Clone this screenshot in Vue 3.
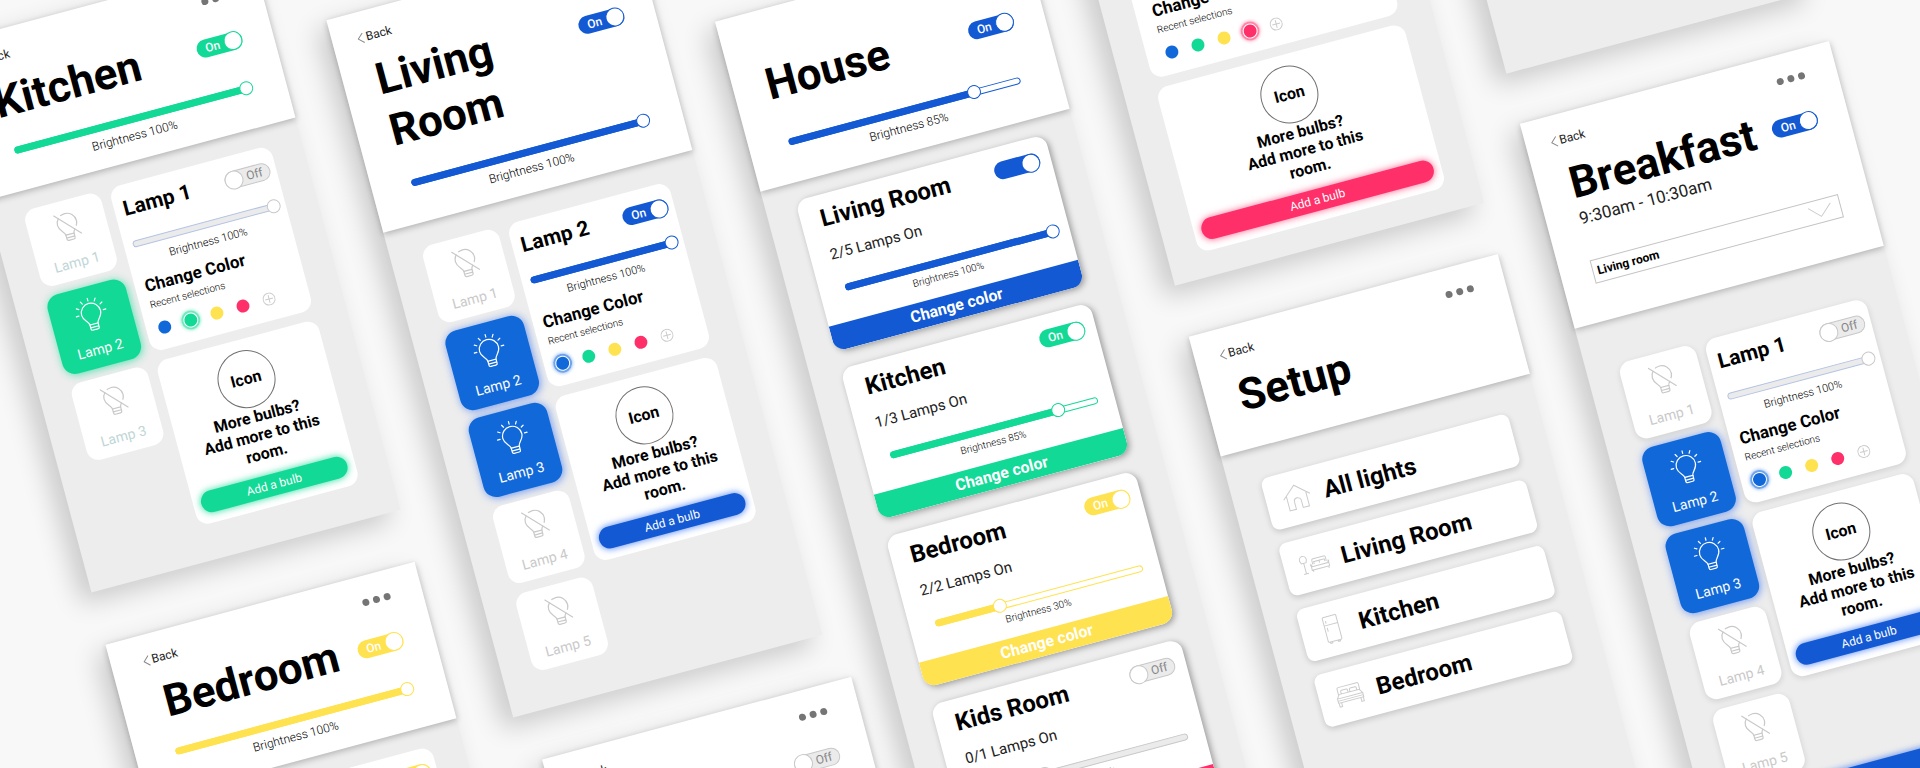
<script setup>
import { reactive } from 'vue'

const swatches = ['blue', 'green', 'yellow', 'pink']

const lampsOf = (count, on) =>
  Array.from({ length: count }, (_, i) => ({ name: `Lamp ${i + 1}`, on: on.includes(i + 1) }))

const boards = reactive([
  {
    id: 'kitchen', x: -65, y: 28, theme: 'green', title: 'Kitchen', back: true, toggle: true,
    slider: { at: 100, label: 100 }, kind: 'room', lamps: lampsOf(3, [2]),
    lamp: { name: 'Lamp 1', on: false }, selected: 'green',
  },
  {
    id: 'bedroom', x: -65, y: 650, theme: 'yellow', title: 'Bedroom', back: true, toggle: true,
    slider: { at: 100, label: 100 }, kind: 'room', lamps: lampsOf(2, [1, 2]),
    lamp: { name: 'Lamp 1', on: true }, selected: 'yellow',
  },
  {
    id: 'living', x: 310, y: 104, theme: 'blue', title: 'Living Room', back: true, toggle: true,
    slider: { at: 100, label: 100 }, kind: 'room', lamps: lampsOf(5, [2, 3]),
    lamp: { name: 'Lamp 2', on: true }, selected: 'blue',
  },
  {
    id: 'kids', x: 327, y: 874, theme: 'off', title: 'Kids Room', back: true, toggle: false,
    slider: { at: 30, label: 30 }, kind: 'room', lamps: lampsOf(1, []),
    lamp: { name: 'Lamp 1', on: false }, selected: 'pink',
  },
  {
    id: 'house', x: 685, y: 206, theme: 'blue', title: 'House', toggle: true,
    slider: { at: 80, label: 85 }, kind: 'house',
    rooms: [
      { name: 'Living Room', lamps: '2/5', theme: 'blue', on: true, text: '', at: 100, label: 100 },
      { name: 'Kitchen', lamps: '1/3', theme: 'green', on: true, text: 'On', at: 81, label: 85 },
      { name: 'Bedroom', lamps: '2/2', theme: 'yellow', on: true, text: 'On', at: 31, label: 30 },
      { name: 'Kids Room', lamps: '0/1', theme: 'pink', on: false, text: 'Off', at: 31, label: 30 },
    ],
  },
  {
    id: 'single', x: 1061, y: 180, theme: 'pink', kind: 'room', lamps: [],
    lamp: { name: 'Lamp 1', on: true }, selected: 'pink',
  },
  {
    id: 'setup', x: 1061, y: 633, theme: 'blue', title: 'Setup', back: true, kind: 'setup',
    items: ['All lights', 'Living Room', 'Kitchen', 'Bedroom'],
  },
  { id: 'blank', x: 1436, y: -107, theme: 'blue', kind: 'blank' },
  {
    id: 'breakfast', x: 1436, y: 513, theme: 'blue', title: 'Breakfast', back: true, toggle: true,
    time: '9:30am - 10:30am', kind: 'room', lamps: lampsOf(5, [2, 3]),
    lamp: { name: 'Lamp 1', on: false }, selected: 'blue', save: true,
  },
])
</script>

<template>
  <main class="stage">
    <div class="canvas">
      <article
        v-for="b in boards"
        :key="b.id"
        class="board"
        :class="[b.id, 'theme-' + b.theme]"
        :style="{ left: b.x + 'px', top: b.y + 'px' }"
      >
        <header v-if="b.title" class="head">
          <div class="bar">
            <a v-if="b.back" class="back" href="#">
              <svg viewBox="0 0 7 11" width="7" height="11"><path d="M6.3 .5 1 5.5l5.3 5" /></svg>Back
            </a>
            <button class="dots" type="button" aria-label="Menu"><i></i><i></i><i></i></button>
          </div>
          <div class="title-row">
            <h1>{{ b.title }}</h1>
            <label v-if="b.toggle !== undefined" class="toggle" :class="{ off: !b.toggle }">
              <input v-model="b.toggle" type="checkbox" :aria-label="b.title" />
              <span>{{ b.toggle ? 'On' : 'Off' }}</span>
            </label>
          </div>
          <template v-if="b.slider">
            <div class="slider" :class="{ off: !b.toggle }">
              <div class="track"><div class="fill" :style="{ width: b.slider.at + '%' }"></div></div>
              <input v-model="b.slider.at" type="range" :aria-label="b.title + ' brightness'" />
            </div>
            <p class="bright">Brightness {{ b.slider.label }}%</p>
          </template>
          <template v-if="b.time">
            <p class="time">{{ b.time }}</p>
            <div class="picker">
              <select aria-label="Room">
                <option>Living room</option>
                <option>Kitchen</option>
                <option>Bedroom</option>
              </select>
              <svg viewBox="0 0 24 12" width="24" height="12"><path d="M.5 .5 11.5 11.5 23.5 .5" /></svg>
            </div>
          </template>
        </header>

        <section v-if="b.kind === 'room'" class="room" :class="{ wide: !b.lamps.length }">
          <div v-if="b.lamps.length" class="lamps">
            <button v-for="l in b.lamps" :key="l.name" class="tile" :class="{ on: l.on }" type="button">
              <svg v-if="l.on" viewBox="0 0 32 34" width="32" height="34">
                <path d="M11.8 27.2c0-3.6-5.6-5.4-5.6-11.4a9.8 9.8 0 0 1 19.6 0c0 6-5.6 7.8-5.6 11.4z" />
                <path d="M11.8 27.2v4.2q0 1.6 1.6 1.6h5.2q1.6 0 1.6-1.6v-4.2M11.8 30.2h8.4" />
                <path d="M16 3.4V.8M9.8 5 8.4 2.6M22.2 5l1.4-2.4M5 9.4 2.8 8.1M27 9.4l2.2-1.3M3.4 15.8H.6M28.6 15.8h2.8" />
              </svg>
              <svg v-else viewBox="0 3 32 34" width="32" height="34">
                <path d="M11.8 27.2c0-3.6-5.6-5.4-5.6-11.4a9.8 9.8 0 0 1 19.6 0c0 6-5.6 7.8-5.6 11.4z" />
                <path d="M11.8 27.2v4.2q0 1.6 1.6 1.6h5.2q1.6 0 1.6-1.6v-4.2M11.8 30.2h8.4" />
                <path class="gap" d="M6.4 4.2 28.4 27.4" />
                <path d="M5 5.6 27.4 29.2" />
              </svg>
              <span>{{ l.name }}</span>
            </button>
          </div>

          <div class="cards">
            <section class="card lamp">
              <div class="lamp-row">
                <h2>{{ b.lamp.name }}</h2>
                <label class="toggle" :class="{ off: !b.lamp.on }">
                  <input v-model="b.lamp.on" type="checkbox" :aria-label="b.lamp.name" />
                  <span>{{ b.lamp.on ? 'On' : 'Off' }}</span>
                </label>
              </div>
              <div class="slider" :class="{ off: !b.lamp.on }">
                <div class="track"><div class="fill"></div></div>
                <input type="range" value="100" :aria-label="b.lamp.name + ' brightness'" />
              </div>
              <p class="bright">Brightness 100%</p>
              <h3>Change Color</h3>
              <p class="recent">Recent selections</p>
              <div class="swatches">
                <button
                  v-for="s in swatches"
                  :key="s"
                  type="button"
                  class="swatch"
                  :class="['swatch-' + s, { selected: s === b.selected }]"
                  :aria-label="s"
                ></button>
                <button class="plus" type="button" aria-label="Add color">
                  <svg viewBox="0 0 13 13" width="13" height="13">
                    <circle cx="6.5" cy="6.5" r="6" /><path d="M6.5 2.5v8M2.5 6.5h8" />
                  </svg>
                </button>
              </div>
            </section>

            <section class="card more">
              <div class="icon">Icon</div>
              <p>More bulbs?<br />Add more to this<br />room.</p>
              <button type="button" class="pill">Add a bulb</button>
            </section>
          </div>
          <button v-if="b.save" type="button" class="pill save">Save</button>
        </section>

        <section v-else-if="b.kind === 'house'" class="rooms">
          <article v-for="r in b.rooms" :key="r.name" class="room-card" :class="'theme-' + r.theme">
            <div class="room-row">
              <h2>{{ r.name }}</h2>
              <label class="toggle" :class="{ off: !r.on }">
                <input v-model="r.on" type="checkbox" :aria-label="r.name" />
                <span>{{ r.text }}</span>
              </label>
            </div>
            <p class="count">{{ r.lamps }} Lamps On</p>
            <div class="slider" :class="{ off: !r.on }">
              <div class="track"><div class="fill" :style="{ width: r.at + '%' }"></div></div>
              <input v-model="r.at" type="range" :aria-label="r.name + ' brightness'" />
            </div>
            <p class="bright">Brightness {{ r.label }}%</p>
            <button type="button" class="change">Change color</button>
          </article>
        </section>

        <nav v-else-if="b.kind === 'setup'" class="items">
          <a v-for="(name, i) in b.items" :key="name" class="item" href="#">
            <svg viewBox="0 0 30 30" width="30" height="30">
              <template v-if="i === 0">
                <path d="M1.5 14.5 15 2.5l13.5 12M5 12v14.5h6.5v-7.5a3.5 3.5 0 0 1 7 0v7.5H25V12" />
              </template>
              <template v-else-if="i === 1">
                <path d="M1 9.5a3.500 4 0 0 1 7 0l-1 3H2zM4.5 12.5v10.5M2 23.500h5" />
                <path d="M13 16v-4q0-1.5 1.5-1.5h11q1.5 0 1.500 1.5v4M14.5 16v-2.5h5.500v2.5M20 16v-2.5h5.5v2.5M11 15.5q-1 1 0 2v4h18v-4q1-1 0-2l-1 2.5H12zM12 21.5v2M28 21.5v2" />
              </template>
              <template v-else-if="i === 2">
                <path d="M8 3q0-1 1-1h12q1 0 1 1v23.5q0 1-1 1H9q-1 0-1-1zM8 10.5h14M10.5 6v2.5M10.5 13v4M10 27.5v1.5h2v-1.5M18 27.5v1.5h2v-1.5" />
              </template>
              <template v-else>
                <path d="M4 14V7q0-1.5 1.5-1.5h19Q26 5.500 26 7v7M7 12.5V10q0-1 1-1h5q1 0 1 1v2.5M16 12.5V10q0-1 1-1h5q1 0 1 1v2.5M4.5 12.5h21L28 16.5H2zM2 16.500v4.5h26v-4.5M2 18.8h26M2.5 21v4h2.5v-4M25 21v4h2.5v-4" />
              </template>
            </svg>
            <span>{{ name }}</span>
          </a>
        </nav>
      </article>
    </div>
  </main>
</template>

<style>
body {
  margin: 0;
  background: #f8f8f8;
}
</style>

<style scoped>
.stage {
  position: relative;
  width: 100%;
  height: 100vh;
  overflow: hidden;
  background: #f8f8f8;
  font-family: Roboto, "Liberation Sans", sans-serif;
  color: #000;
}
.canvas {
  position: absolute;
  left: 0;
  top: 0;
  transform: rotate(-15deg);
  transform-origin: 0 0;
}
.board {
  position: absolute;
  width: 320px;
  background: #ededed;
  box-shadow: -12px 8px 26px rgba(0, 0, 0, 0.19);
}
.bedroom, .kids, .setup, .blank { min-height: 568px; }

.theme-blue { --c: #1259d3; --glow: rgba(18, 89, 240, 0.6); --tile: #1169d9; }
.theme-green { --c: #12d995; --glow: rgba(18, 217, 149, 0.7); --tile: #12d995; }
.theme-yellow { --c: #ffe24f; --glow: rgba(255, 226, 79, 0.7); --tile: #ffe24f; }
.theme-pink { --c: #ff3069; --glow: rgba(255, 48, 105, 0.6); --tile: #ff3069; }
.theme-off { --c: #bbb; --glow: rgba(0, 0, 0, 0.2); --tile: #bbb; }

h1, h2, h3, p { margin: 0; }
button {
  padding: 0;
  border: 0;
  background: none;
  font-family: inherit;
  color: inherit;
}
a { color: inherit; text-decoration: none; }
svg { display: block; fill: none; stroke: currentColor; stroke-width: 1; }

/* Header */
.head {
  position: relative;
  background: #fff;
  padding-bottom: 17px;
  box-shadow: 0 2px 6px rgba(0, 0, 0, 0.25);
}
.breakfast .head { padding-bottom: 38px; }
.setup .head { padding-bottom: 26px; }
.bar {
  display: flex;
  align-items: center;
  height: 14px;
  padding: 19px 32px 12px 25px;
}
.house .bar { padding-bottom: 16px; }
.bedroom .bar { padding-left: 32px; }
.back {
  display: flex;
  align-items: center;
  gap: 2px;
  font-size: 12px;
  line-height: 14px;
  color: #222;
}
.back svg { color: #888; }
.dots {
  display: flex;
  gap: 4px;
  margin-left: auto;
}
.dots i {
  width: 7px;
  height: 7px;
  border-radius: 50%;
  background: #757575;
}
.title-row {
  display: flex;
  justify-content: space-between;
  align-items: flex-start;
  padding: 0 31px 0 33px;
}
.bedroom .title-row { padding-left: 42px; }
h1 {
  font-size: 44px;
  line-height: 53px;
  font-weight: 700;
}
.title-row .toggle { margin-top: 17px; }
.head .slider { margin: 16px 40px 0; }
.living .head .slider { margin-top: 21px; }
.house .head .slider { margin-top: 26px; }
.bright {
  margin-top: 3px;
  font-size: 12px;
  line-height: 14px;
  font-weight: 300;
  text-align: center;
}
.time {
  padding-left: 33px;
  font-size: 17px;
  line-height: 18px;
  font-weight: 400;
  color: #222;
}
.picker {
  display: grid;
  align-items: center;
  margin: 34px 31px 0 32px;
}
.picker > * { grid-area: 1 / 1; }
.picker select {
  appearance: none;
  height: 24px;
  padding: 0 4px;
  border: 1px solid #c4c4c4;
  border-radius: 0;
  background: #fff;
  color: #000;
  font: 700 12px/16px Roboto, "Liberation Sans", sans-serif;
}
.picker svg {
  justify-self: end;
  margin-right: 9px;
  color: #ccc;
  pointer-events: none;
}

/* Toggle */
.toggle {
  display: grid;
  flex: none;
  align-items: center;
  width: 47px;
  height: 19px;
}
.toggle > * { grid-area: 1 / 1; }
.toggle input {
  appearance: none;
  display: flex;
  justify-content: flex-end;
  align-items: center;
  box-sizing: border-box;
  width: 47px;
  height: 18px;
  margin: 0;
  border-radius: 9px;
  background: var(--c);
}
.toggle input::before {
  content: "";
  box-sizing: border-box;
  flex: none;
  width: 19px;
  height: 19px;
  border: 1px solid var(--c);
  border-radius: 50%;
  background: #fff;
}
.toggle span {
  padding-left: 9px;
  font-size: 12px;
  line-height: 14px;
  font-weight: 500;
  color: #fff;
  pointer-events: none;
}
.toggle.off input {
  justify-content: flex-start;
  border: 1px solid #c8c8c8;
  background: #ebebeb;
}
.toggle.off input::before { border-color: #c8c8c8; margin-left: -1px; }
.toggle.off span {
  padding: 0 8px 0 0;
  text-align: right;
  font-weight: 400;
  color: #858585;
}

/* Slider */
.slider {
  display: grid;
  align-items: center;
  height: 14px;
}
.slider > * { grid-area: 1 / 1; }
.track {
  box-sizing: border-box;
  height: 7px;
  border: 1px solid var(--c);
  border-radius: 4px;
  background: #fff;
}
.fill {
  height: 7px;
  margin: -1px;
  border-radius: 4px;
  background: var(--c);
}
.slider input {
  appearance: none;
  height: 14px;
  margin: 0 -7px;
  background: transparent;
}
.slider input::-webkit-slider-thumb {
  appearance: none;
  box-sizing: border-box;
  width: 14px;
  height: 14px;
  border: 1px solid var(--c);
  border-radius: 50%;
  background: #fff;
}
.slider.off .track { border-color: #b4c3e4; background: #ebebeb; }
.room-card .slider.off .track { border-color: #c8c8c8; }
.slider.off .fill { background: none; }
.slider.off input::-webkit-slider-thumb { border-color: #c8c8c8; }

/* Room screen */
.room {
  display: grid;
  grid-template-columns: 79px 1fr;
  align-items: start;
  gap: 10px;
  padding: 20px 32px 36px 32px;
}
.living .room { padding: 24px 32px 38px; }
.breakfast .room { padding-top: 45px; }
.room.wide { grid-template-columns: 1fr; padding: 25px 32px; }
.lamps, .cards { display: grid; gap: 10px; }
.tile {
  display: flex;
  flex-direction: column;
  align-items: center;
  justify-content: space-between;
  height: 80px;
  padding: 10px 0 9px;
  border-radius: 12px;
  background: #fff;
  color: #c9c9c9;
  font-size: 14px;
  line-height: 16px;
}
.kitchen .tile { color: #c0d6d6; }
.kitchen .tile svg { color: #c9c9c9; }
.tile.on, .kitchen .tile.on, .kitchen .tile.on svg { color: #fff; }
.tile.on {
  background: var(--tile);
  box-shadow: 0 0 0 1px var(--tile), 1px 1px 8px 1px var(--glow);
}
.tile svg { stroke-width: 1.2; stroke-linecap: round; }
.tile .gap { stroke: #fff; stroke-width: 3; }
.card {
  box-sizing: border-box;
  height: 170px;
  border-radius: 12px;
  background: #fff;
}
.breakfast .card, .breakfast .tile:not(.on) { box-shadow: 0 2px 6px rgba(0, 0, 0, 0.12); }
.lamp { padding: 12px 6px 0 9px; }
.wide .lamp { padding: 12px 13px 0 16px; }
.lamp-row, .room-row {
  display: flex;
  justify-content: space-between;
  align-items: center;
}
.lamp h2 { font-size: 21px; line-height: 24px; font-weight: 700; }
.lamp .slider { margin: 17px 6px 0 0; }
.lamp .bright { margin: 4px 5px 0 0; font-size: 11px; }
h3 { margin-top: 9px; padding-left: 1px; font-size: 17px; line-height: 20px; font-weight: 700; }
.recent { margin-top: 4px; padding-left: 1px; font-size: 10px; line-height: 12px; font-weight: 300; }
.swatches {
  display: flex;
  align-items: center;
  gap: 8px;
  height: 20px;
  margin-top: 8px;
}
.swatch, .plus {
  display: grid;
  place-items: center;
  width: 19px;
  height: 19px;
  border-radius: 50%;
}
.plus { color: #ccc; }
.swatch::before {
  content: "";
  width: 13px;
  height: 13px;
  border-radius: 50%;
  background: var(--s);
}
.swatch.selected {
  box-sizing: border-box;
  border: 2px solid var(--ring);
  box-shadow: 0 0 4px var(--ring);
}
.swatch-blue { --s: #1169d9; --ring: #6fa4ea; }
.swatch-green { --s: #12d995; --ring: #72e8bf; }
.swatch-yellow { --s: #ffe24f; --ring: #ffee95; }
.swatch-pink { --s: #ff3069; --ring: #ff86a6; }

.more {
  display: flex;
  flex-direction: column;
  align-items: center;
  padding: 11px 8px 10px;
  font-size: 16px;
  line-height: 19px;
  font-weight: 700;
  text-align: center;
}
.icon {
  box-sizing: border-box;
  width: 58px;
  height: 58px;
  border: 1px solid #707070;
  border-radius: 50%;
  line-height: 56px;
}
.more p { padding-left: 2px; }
.pill {
  width: 100%;
  height: 22px;
  border-radius: 11px;
  background: var(--c);
  box-shadow: 0 0 6px 1px var(--glow);
  color: #fff;
  font-size: 12px;
  line-height: 22px;
}
.more .pill { margin-top: auto; }
.save { grid-column: 1 / -1; height: 32px; border-radius: 16px; }

/* House screen */
.rooms {
  display: grid;
  gap: 18px;
  padding: 18px 31px 36px;
}
.room-card {
  border-radius: 12px;
  background: #fff;
  box-shadow: 2px 2px 6px rgba(0, 0, 0, 0.35);
  overflow: hidden;
}
.room-row { padding: 10px 11px 0 20px; }
.room-row h2 { font-size: 24px; line-height: 28px; font-weight: 700; }
.count {
  margin-top: 13px;
  padding-left: 20px;
  font-size: 15px;
  line-height: 20px;
  font-weight: 400;
  color: #222;
}
.room-card .slider { margin: 18px 17px 0 26px; }
.room-card .bright { margin-top: 2px; font-size: 10px; line-height: 12px; }
.change {
  display: block;
  width: 100%;
  height: 26px;
  margin-top: 13px;
  background: var(--c);
  color: #fff;
  font-size: 16px;
  line-height: 26px;
  font-weight: 700;
}

/* Setup screen */
.items {
  display: grid;
  gap: 14px;
  padding: 32px;
}
.item {
  display: flex;
  align-items: center;
  gap: 13px;
  height: 54px;
  padding: 0 16px;
  border-radius: 8px;
  background: #fff;
  box-shadow: 0 2px 6px rgba(0, 0, 0, 0.18);
  font-size: 24px;
  font-weight: 700;
}
.item svg { color: #ccc; }
</style>
